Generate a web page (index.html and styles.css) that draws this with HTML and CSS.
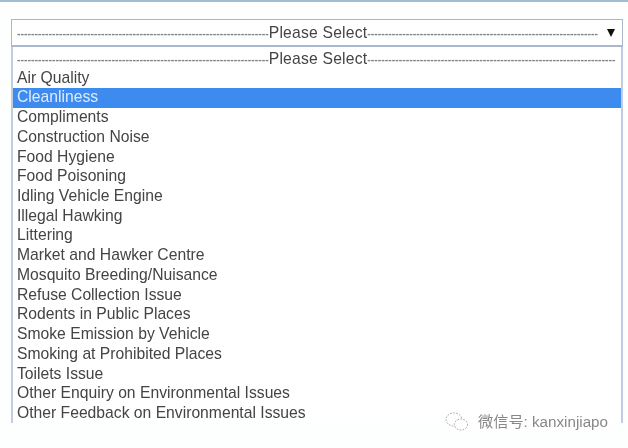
FILE: index.html
```html
<!DOCTYPE html>
<html lang="en">
<head>
  <meta charset="UTF-8">
  <title>Category</title>
  <link rel="stylesheet" href="styles.css">
</head>
<body>
  <div class="topline"></div>
  <div class="select-box">
    <div class="dash-row">
      <span class="dashes">------------------------------------------------------------------------</span>
      <span class="label">Please Select</span>
      <span class="dashes">------------------------------------------------------------------</span>
    </div>
    <span class="arrow"></span>
  </div>
  <ul class="options">
    <li class="dash-row">
      <span class="dashes">------------------------------------------------------------------------</span>
      <span class="label">Please Select</span>
      <span class="dashes">-----------------------------------------------------------------------</span>
    </li>
    <li>Air Quality</li>
    <li class="selected">Cleanliness</li>
    <li>Compliments</li>
    <li>Construction Noise</li>
    <li>Food Hygiene</li>
    <li>Food Poisoning</li>
    <li>Idling Vehicle Engine</li>
    <li>Illegal Hawking</li>
    <li>Littering</li>
    <li>Market and Hawker Centre</li>
    <li>Mosquito Breeding/Nuisance</li>
    <li>Refuse Collection Issue</li>
    <li>Rodents in Public Places</li>
    <li>Smoke Emission by Vehicle</li>
    <li>Smoking at Prohibited Places</li>
    <li>Toilets Issue</li>
    <li>Other Enquiry on Environmental Issues</li>
    <li>Other Feedback on Environmental Issues</li>
  </ul>
  <div class="watermark">
    <svg class="wechat" width="26" height="20" viewBox="0 0 26 20" fill="none" stroke="#9a9a9a" stroke-width="1" stroke-dasharray="1.5 1.5">
      <ellipse cx="10" cy="7.5" rx="8" ry="6.5"/>
      <ellipse cx="17" cy="12.5" rx="6.5" ry="5.5" fill="#fff"/>
    </svg>
    <span class="wm-text">微信号: kanxinjiapo</span>
  </div>
</body>
</html>
```

FILE: styles.css
```css
body {
  margin: 0;
  width: 628px;
  height: 448px;
  overflow: hidden;
  background: #fdfefe;
  font-family: "Liberation Sans", Arial, sans-serif;
  font-size: 15.7px;
  color: #444;
}
.topline {
  height: 2px;
  background: #9fbdd3;
}
.select-box {
  display: flex;
  align-items: center;
  justify-content: space-between;
  box-sizing: border-box;
  height: 28px;
  margin: 17px 5px 0 11px;
  padding: 0 7px 0 5px;
  border: 1px solid #a9b9cb;
  border-bottom-width: 2px;
  background: #fff;
  filter: blur(0.6px);
}
.dash-row {
  display: flex;
  align-items: center;
  white-space: nowrap;
}
.dashes {
  color: #7d8387;
  font-size: 10.5px;
  font-weight: bold;
}
.label {
  letter-spacing: 0.2px;
}
.arrow {
  width: 0;
  height: 0;
  border-left: 4px solid transparent;
  border-right: 4px solid transparent;
  border-top: 8px solid #111;
}
.options {
  list-style: none;
  box-sizing: border-box;
  height: 376px;
  margin: 0 5px 0 11px;
  padding: 2px 0 0;
  overflow: hidden;
  border-left: 2px solid #c3cbe0;
  border-right: 2px solid #c3cbe0;
  background: #fff;
  filter: blur(0.6px);
}
.options li {
  height: 19.72px;
  line-height: 18.4px;
  padding-left: 4px;
}
.options li.selected {
  background: #3e8bf0;
  color: #dfeafb;
}
.watermark {
  position: absolute;
  left: 444px;
  top: 409px;
  display: flex;
  align-items: flex-start;
  gap: 8px;
  color: #888;
  font-size: 15.2px;
  filter: blur(0.4px);
}
.wechat {
  margin-top: 3px;
}
.wm-text {
  font-family: "Liberation Sans", "Noto Sans CJK SC", sans-serif;
}
```
